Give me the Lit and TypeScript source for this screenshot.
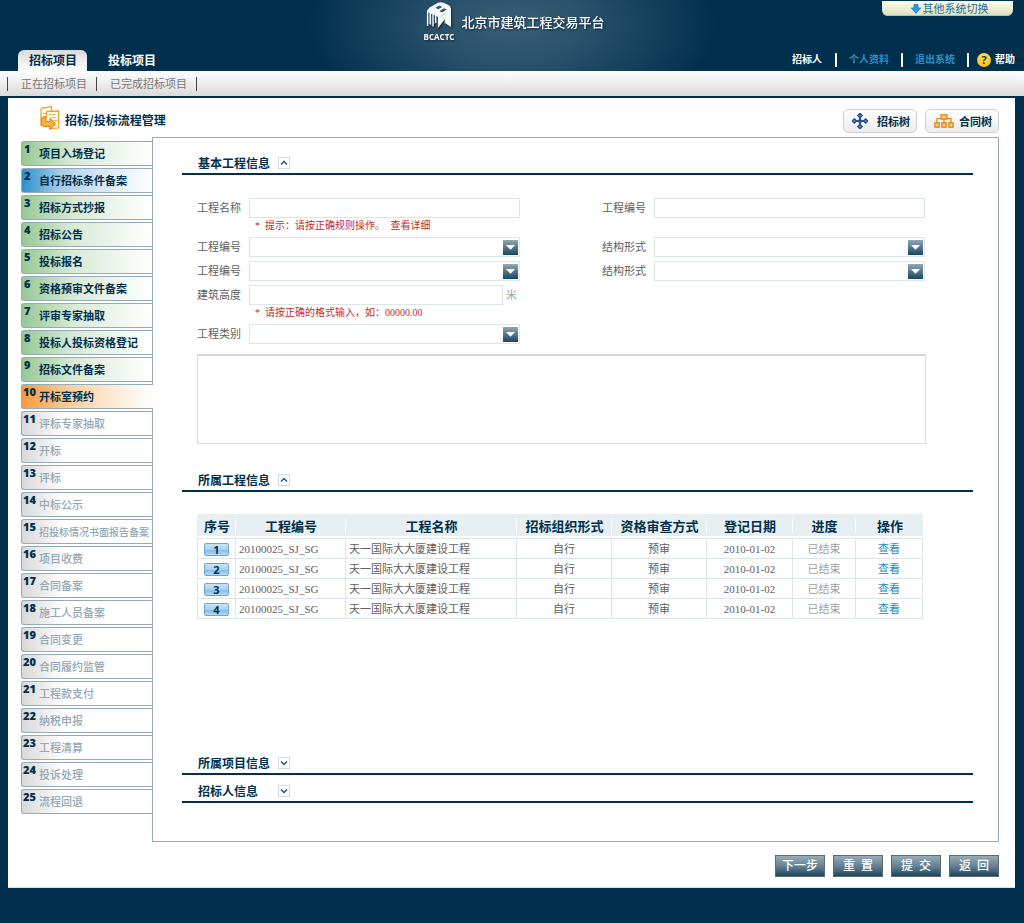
import { LitElement, html, css, svg, nothing } from "lit";
import { classMap } from "lit/directives/class-map.js";

type StepState = "done" | "info" | "current" | "pending";

interface Step {
  label: string;
  state: StepState;
}

const step = (state: StepState) => (label: string): Step => ({ label, state });

const STEPS: Step[] = [
  step("done")("项目入场登记"),
  step("info")("自行招标条件备案"),
  ...["招标方式抄报", "招标公告", "投标报名", "资格预审文件备案", "评审专家抽取", "投标人投标资格登记", "招标文件备案"].map(step("done")),
  step("current")("开标室预约"),
  ...[
    "评标专家抽取", "开标", "评标", "中标公示", "招投标情况书面报告备案", "项目收费", "合同备案", "施工人员备案",
    "合同变更", "合同履约监管", "工程款支付", "纳税申报", "工程清算", "投诉处理", "流程回退",
  ].map(step("pending")),
];

const COLUMNS = [
  { label: "序号", cls: "c-no" },
  { label: "工程编号", cls: "c-code" },
  { label: "工程名称", cls: "c-name" },
  { label: "招标组织形式", cls: "c-form" },
  { label: "资格审查方式", cls: "c-form" },
  { label: "登记日期", cls: "c-date" },
  { label: "进度", cls: "c-progress" },
  { label: "操作", cls: "c-action" },
];

const ROWS = [1, 2, 3, 4].map((no) => ({
  no,
  code: "20100025_SJ_SG",
  name: "天一国际大大厦建设工程",
  form: "自行",
  review: "预审",
  date: "2010-01-02",
  progress: "已结束",
}));

const logo = html`<svg class="logo" viewBox="0 0 26 28" width="26" height="28" aria-hidden="true">
  <path d="M1 9 L3.500 5.500 L12 .8 Q15 -.2 17.500 .8 L22 2.800 Q24.800 4 25 6.500 V25 L19 21 V17 L12 26 V15 L1 10 Z" fill="#f4f6f7"/>
  <path d="M1.200 10 L12 15 V27 H10 V22 H7 V24 H4.500 V22 H1.200 Z" fill="#2f566d"/>
  <path d="M1.600 8.500V24M4.300 9.500V22.500M7 11V24.500M9.700 12.500V21" stroke="#f4f6f7" stroke-width="1.400"/>
  <path d="M9.500 5.800 L13.500 3.600 L16.200 4.900 L12.200 7.200 Z M13.500 9 L18 6.300 L20.600 7.600 L16 10.400 Z" fill="#2f566d"/>
  <path d="M14.500 14.500 L19 11.500 M19 17V21.500" fill="none" stroke="#c3ced4"/>
</svg>`;

const flowIcon = html`<svg viewBox="0 0 20 25" width="20" height="25" aria-hidden="true">
  <path d="M1 2.500 L11.500 .6 V5 M1 2.500 V20" fill="none" stroke="#f3a428" stroke-width="1.300"/>
  <path d="M3 7.500h3M3 10.500h3" stroke="#f3a428"/>
  <path d="M6.500 5.500 L18.600 5 V22 L9 22.500" fill="#fff" stroke="#f3a428" stroke-width="1.300"/>
  <path d="M6.500 5.500V12" stroke="#f3a428" stroke-width="1.200"/>
  <path d="M8.500 8.500h7M11.500 11.500h5M14 14.500h3M14 19.500h3" stroke="#f5b64e"/>
  <path d="M1.500 12 L6 11.500 V15.500 H10 V12 L15.500 17.500 L10 23.500 V20.500 H4 Q1.500 20.500 1.500 17.500 Z" fill="#f6b240" stroke="#d98510"/>
</svg>`;

const crossIcon = html`<svg viewBox="0 0 16 16" width="16" height="16" aria-hidden="true">
  <path d="M8 2.500V13.500M2.500 8H13.500" stroke="#5b82b3" stroke-width="1.500"/>
  <g fill="#5f8bc0" stroke="#1f4f8c" stroke-width="1.300">
    <path d="M8 .2 L10.200 2.400 L8 4.600 L5.800 2.400Z"/><path d="M8 11.400 L10.200 13.600 L8 15.800 L5.800 13.600Z"/>
    <path d="M2.400 5.800 L4.600 8 L2.400 10.200 L.2 8Z"/><path d="M13.600 5.800 L15.800 8 L13.600 10.200 L11.400 8Z"/>
  </g>
  <g fill="#1f4f8c">
    <circle cx="8" cy="8" r="2"/><circle cx="8" cy="5.400" r="1"/><circle cx="8" cy="10.600" r="1"/>
    <circle cx="5.400" cy="8" r="1.100"/><circle cx="10.600" cy="8" r="1.100"/>
  </g>
</svg>`;

const chartIcon = html`<svg viewBox="0 0 20 14" width="20" height="14" aria-hidden="true">
  <path d="M10 5.500V9M3 9V4.500H7M17 9V4.500H13" fill="none" stroke="#d98213" stroke-width="1.200"/>
  <g fill="#f8c777" stroke="#d98213" stroke-width="1.200">
    <rect x="7" y=".8" width="6" height="4.400"/>
    <rect x=".8" y="8.800" width="4.400" height="4.400"/>
    <rect x="7.800" y="8.800" width="4.400" height="4.400"/>
    <rect x="14.800" y="8.800" width="4.400" height="4.400"/>
  </g>
</svg>`;

const downArrow = html`<svg viewBox="0 0 10 10" width="10" height="10" aria-hidden="true">
  <path d="M3 .5H7V4H9.600L5 9.300L.4 4H3Z" fill="#2e95ea" stroke="#1c75cf" stroke-width=".8"/>
</svg>`;

const chevron = (open: boolean) => html`<svg viewBox="0 0 10 10" width="10" height="10" aria-hidden="true">
  ${open
    ? svg`<path d="M2 6.500 L5 3.500 L8 6.500" fill="none" stroke="#2c566e" stroke-width="1.500"/>`
    : svg`<path d="M2 3.500 L5 6.500 L8 3.500" fill="none" stroke="#2c566e" stroke-width="1.500"/>`}
</svg>`;

class AppRoot extends LitElement {
  static properties = {
    open: { state: true },
  };

  declare open: Record<string, boolean>;

  constructor() {
    super();
    this.open = { basic: true, works: true, project: false, owner: false };
  }

  static styles = css`
    :host {
      --navy: #00304d;
      --line: #94acba;
      --field: #dce5e8;
      display: block;
      min-height: 100vh;
      background: var(--navy);
      color: #606060;
      font-family: "Liberation Serif", "Noto Sans CJK SC", sans-serif;
      font-size: 11px;
    }
    *, *::before, *::after { box-sizing: border-box; }
    a { color: inherit; text-decoration: none; }
    button, input, select, textarea { font: inherit; margin: 0; }
    button { cursor: pointer; }
    svg { display: block; flex: none; }
    h1, h2, ul, ol { margin: 0; padding: 0; list-style: none; }

    .header {
      display: grid;
      grid-template-columns: 1fr auto 1fr;
      height: 71px;
      background: radial-gradient(ellipse 205px 110px at 50% 24px, #3a5d72, #2a526b 35%, rgba(0, 48, 77, 0)) var(--navy);
    }
    .tabs { display: flex; align-self: end; padding-left: 18px; font-size: 12px; font-weight: 700; color: #fff; }
    .tab { height: 21px; padding: 1px 10px 0 11px; line-height: 20px; border-radius: 6px 6px 0 0; }
    .tab + .tab { margin-left: 10px; }
    .tab.on { color: var(--navy); background: linear-gradient(#d9dadb, #fff); }
    .brand { display: flex; gap: 7px; padding: 2px 0 0 4px; color: #fff; }
    .mark { display: flex; flex-direction: column; align-items: center; }
    .logo, .bcactc, .name { filter: drop-shadow(1px 1px 1px rgba(0, 20, 35, .7)); }
    .bcactc { font: 700 8px/14px "Open Sans", sans-serif; }
    .name { font-size: 13px; font-weight: 500; line-height: 42px; }
    .side { display: flex; flex-direction: column; justify-content: space-between; align-items: flex-end; }
    .switch {
      display: flex; align-items: center; justify-content: center; gap: 2px;
      width: 131px; height: 15px; margin: 1px 11px 0 0; padding: 1px 0 0 4px;
      border: 0; border-radius: 0 0 6px 6px;
      background: linear-gradient(#fdfdea, #dbe0c2);
      box-shadow: inset 0 -1px #b9bf9f;
      color: #1d6f97; line-height: 14px;
    }
    .user { display: flex; align-items: center; height: 14px; margin: 0 9px 4px 0; font-size: 10px; font-weight: 700; line-height: 14px; color: #fff; }
    .user > * { padding: 0 13px; border-left: 2px solid #fff; }
    .user > :first-child { border-left: 0; }
    .user > :last-child { padding: 0 0 0 8px; }
    .user .blue { color: #2b8fc6; padding: 0 12px; }
    .help { display: flex; align-items: center; gap: 4px; }
    .qmark { width: 14px; height: 14px; border-radius: 50%; background: radial-gradient(circle at 50% 30%, #ffe45c, #f7b500); color: #31301f; font: 700 11px/14px "Open Sans", sans-serif; text-align: center; }

    .subnav { display: flex; align-items: center; height: 25px; padding: 1px 0 0 7px; background: linear-gradient(#fff, #dadada); color: #777; line-height: 14px; }
    .subnav a { padding: 0 9px 0 13px; border-left: 1px solid #444; }
    .subnav a:last-child { border-right: 1px solid #444; }

    .page { margin: 2px 9px 0 8px; padding: 0 16px 10px 13px; background: #fff; border-bottom: 1px solid #dbe3e8; }
    .shell { padding-bottom: 35px; }
    .titlebar { display: flex; align-items: center; height: 39px; padding-left: 19px; }
    .titlebar h1 { flex: 1; margin-left: 5px; padding-top: 5px; font-size: 12px; font-weight: 700; line-height: 20px; color: var(--navy); font-family: "Noto Sans CJK SC", sans-serif; }
    .titlebar > svg { margin-top: 2px; }
    .tree {
      display: flex; align-items: center; justify-content: space-between;
      width: 74px; height: 24px; margin: 6px 0 0 8px; padding: 0 6px 0 8px;
      border: 1px solid #cdcfd0; border-radius: 5px;
      background: linear-gradient(#fff, #ececec);
      color: var(--navy); font-weight: 700;
    }

    .work { display: flex; align-items: stretch; }
    .steps { width: 131px; flex: none; padding-top: 4px; display: flex; flex-direction: column; gap: 2px; }
    .step {
      display: grid; grid-template-columns: 17px 1fr; height: 25px; padding-top: 1px;
      border: 1px solid var(--line); border-right: 0; border-radius: 3px 0 0 3px;
      color: #93a8b5; line-height: 23px; white-space: nowrap; font-weight: 500;
    }
    .num { padding-left: 1px; color: var(--navy); font: 800 11px/11px "Open Sans", "Noto Sans", sans-serif; }
    .num.single { padding-left: 2px; }
    .step.done { color: var(--navy); font-weight: 700; background: linear-gradient(90deg, #97c894, #d9ead7 40%, #e9f3e8 65%, #fff); }
    .step.info { color: var(--navy); font-weight: 700; background: linear-gradient(90deg, #2b90cb, #a9cfe8 30%, #d6e8f4 60%, #fff); }
    .step.pending { background: linear-gradient(90deg, #d8d8d8, #fff 32%); }
    .step.current { position: relative; z-index: 1; margin-right: -1px; color: var(--navy); font-weight: 700; background: linear-gradient(90deg, #fb9a3c, #fdd2a4 40%, #feead5 70%, #fff); }
    .small { font-size: 10px; }

    .board { flex: 1; min-width: 0; padding: 9px 25px 38px 29px; border: 1px solid var(--line); }
    .head { display: flex; align-items: center; gap: 8px; height: 28px; padding: 6px 0 0 16px; border-bottom: 2px solid var(--navy); }
    .head h2 { min-width: 72px; padding-top: 2px; font-size: 12px; font-weight: 700; line-height: 18px; color: var(--navy); }
    .toggle { display: grid; place-items: center; width: 12px; height: 12px; padding: 0; border: 1px solid #cfdce2; background: #fff; }

    .form { padding: 23px 47px 20px 15px; }
    .grid { display: grid; grid-template-columns: 52px minmax(0, 1fr) 82px 52px minmax(0, 1fr); row-gap: 4px; align-items: start; padding-right: 1px; line-height: 20px; }
    .grid label { padding-top: 1px; line-height: 19px; }
    .left { grid-column: 1; }
    .right { grid-column: 4; }
    .box, .pick { display: block; width: 100%; height: 20px; padding: 0 4px; border: 1px solid var(--field); border-radius: 0; background: #fff; color: #444; outline: 0; }
    .pick {
      appearance: none;
      background: url("data:image/svg+xml,%3Csvg xmlns='http://www.w3.org/2000/svg' width='15' height='15'%3E%3Cdefs%3E%3ClinearGradient id='g' x2='0' y2='1'%3E%3Cstop stop-color='%2394a8b4'/%3E%3Cstop offset='1' stop-color='%23174560'/%3E%3C/linearGradient%3E%3C/defs%3E%3Crect width='15' height='15' fill='url(%23g)'/%3E%3Cpath d='M3 5h9l-4.500 4.800z' fill='%23fff'/%3E%3C/svg%3E") no-repeat right 1px center #fff;
    }
    .unit { display: flex; gap: 3px; color: #a0a0a0; }
    .unit span { width: 15px; }
    .hint { padding-left: 6px; color: #c52a2a; font-size: 10px; line-height: 15px; }
    .star { display: inline-block; width: 10px; }
    .hint a { margin-left: 3px; }
    .memo { display: block; width: 100%; height: 90px; margin-top: 10px; padding: 4px; border: 1px solid #d9dcdd; border-top: 2px solid #d5d7d8; resize: none; outline: 0; }

    .list { padding: 22px 50px 128px 15px; }
    table { width: 100%; table-layout: fixed; border-collapse: separate; border-spacing: 0; border-bottom: 1px solid var(--field); }
    th { height: 24px; padding: 3px 0 0 2px; border-bottom: 2px solid #fff; background: linear-gradient(#fff, #fff) 0 5px / 1px 14px no-repeat, #e7eff3; color: var(--navy); font-size: 13px; font-weight: 700; line-height: 19px; white-space: nowrap; }
    th:first-child { background: #e7eff3; background-clip: padding-box; }
    td { height: 20px; padding: 1px 0 0; border: 1px solid var(--field); border-width: 1px 0 0 1px; line-height: 18px; text-align: center; white-space: nowrap; }
    td:last-child { border-right-width: 1px; color: #1f88c0; }
    td.text { padding-left: 3px; text-align: left; }
    td.dim { color: #a0a0a0; }
    .c-no { width: 38px; }
    .c-code { width: 110px; }
    .c-form { width: 95px; }
    .c-date { width: 86px; }
    .c-progress { width: 63px; }
    .c-action { width: 68px; }
    .badge { display: block; width: 25px; height: 13px; margin: 0 auto; border: 1px solid #6ba6d0; border-radius: 2px; background: linear-gradient(#cbe3f4, #aad2ee 50%, #7fbbe4 55%, #b6dbf4); color: var(--navy); font: 700 11px/11px "Open Sans", sans-serif; }

    .actions { display: flex; justify-content: flex-end; gap: 8px; margin-top: 13px; }
    .act { width: 50px; height: 22px; padding: 0; border: 1px solid #62686c; background: linear-gradient(#98abb6, #5f7d8e 55%, #1b4560); color: #fff; font-size: 12px; font-weight: 500; line-height: 20px; white-space: nowrap; }
  `;

  private toggle(key: string) {
    this.open = { ...this.open, [key]: !this.open[key] };
  }

  private section(key: string, title: string, body: unknown = nothing) {
    const open = this.open[key];
    return html`<section>
      <div class="head">
        <h2>${title}</h2>
        <button class="toggle" type="button" aria-label=${title} aria-expanded=${open ? "true" : "false"} @click=${() => this.toggle(key)}>
          ${chevron(open)}
        </button>
      </div>
      ${open ? body : nothing}
    </section>`;
  }

  private picker(id: string, label: string, side: "left" | "right") {
    return html`<label class=${side} for=${id}>${label}</label>
      <select class="pick" id=${id}><option></option></select>`;
  }

  private form() {
    return html`<div class="form">
      <div class="grid">
        <label class="left" for="name">工程名称</label>
        <div>
          <input class="box" id="name" type="text" />
          <div class="hint"><span class="star">*</span>提示：请按正确规则操作。<a href="#detail"> 查看详细</a></div>
        </div>
        <label class="right" for="code">工程编号</label>
        <input class="box" id="code" type="text" />
        ${this.picker("code-a", "工程编号", "left")}
        ${this.picker("struct-a", "结构形式", "right")}
        ${this.picker("code-b", "工程编号", "left")}
        ${this.picker("struct-b", "结构形式", "right")}
        <label class="left" for="height">建筑高度</label>
        <div>
          <div class="unit"><input class="box" id="height" type="text" /><span>米</span></div>
          <div class="hint"><span class="star">*</span>请按正确的格式输入，如：00000.00</div>
        </div>
        ${this.picker("kind", "工程类别", "left")}
      </div>
      <textarea class="memo" aria-label="备注"></textarea>
    </div>`;
  }

  private table() {
    return html`<div class="list">
      <table>
        <thead>
          <tr>${COLUMNS.map((c) => html`<th class=${c.cls} scope="col">${c.label}</th>`)}</tr>
        </thead>
        <tbody>
          ${ROWS.map((r) => html`<tr>
            <td><span class="badge">${r.no}</span></td>
            <td class="text">${r.code}</td>
            <td class="text">${r.name}</td>
            <td>${r.form}</td>
            <td>${r.review}</td>
            <td>${r.date}</td>
            <td class="dim">${r.progress}</td>
            <td><a href="#row-${r.no}">查看</a></td>
          </tr>`)}
        </tbody>
      </table>
    </div>`;
  }

  render() {
    return html`<div class="shell">
      <header class="header">
        <nav class="tabs">
          <a class="tab on" href="#tender">招标项目</a>
          <a class="tab" href="#bid">投标项目</a>
        </nav>
        <div class="brand">
          <div class="mark">${logo}<span class="bcactc">BCACTC</span></div>
          <span class="name">北京市建筑工程交易平台</span>
        </div>
        <div class="side">
          <button class="switch" type="button">${downArrow}其他系统切换</button>
          <nav class="user">
            <span>招标人</span>
            <a class="blue" href="#profile">个人资料</a>
            <a class="blue" href="#logout">退出系统</a>
            <a class="help" href="#help"><span class="qmark">?</span>帮助</a>
          </nav>
        </div>
      </header>
      <nav class="subnav">
        <a href="#active">正在招标项目</a>
        <a href="#finished">已完成招标项目</a>
      </nav>
      <main class="page">
        <div class="titlebar">
          ${flowIcon}
          <h1>招标/投标流程管理</h1>
          <button class="tree" type="button">${crossIcon}招标树</button>
          <button class="tree" type="button">${chartIcon}合同树</button>
        </div>
        <div class="work">
          <nav class="steps">
            ${STEPS.map((s, i) => html`<a class=${classMap({ step: true, [s.state]: true })} href="#step-${i + 1}">
              <span class=${classMap({ num: true, single: i < 9 })}>${i + 1}</span>
              <span class=${classMap({ small: s.label.length > 10 })}>${s.label}</span>
            </a>`)}
          </nav>
          <div class="board">
            ${this.section("basic", "基本工程信息", this.form())}
            ${this.section("works", "所属工程信息", this.table())}
            ${this.section("project", "所属项目信息")}
            ${this.section("owner", "招标人信息")}
          </div>
        </div>
        <div class="actions">
          <button class="act" type="button">下一步</button>
          <button class="act" type="button">重\u2002置</button>
          <button class="act" type="button">提\u2002交</button>
          <button class="act" type="button">返\u2002回</button>
        </div>
      </main>
    </div>`;
  }
}

customElements.define("app-root", AppRoot);
